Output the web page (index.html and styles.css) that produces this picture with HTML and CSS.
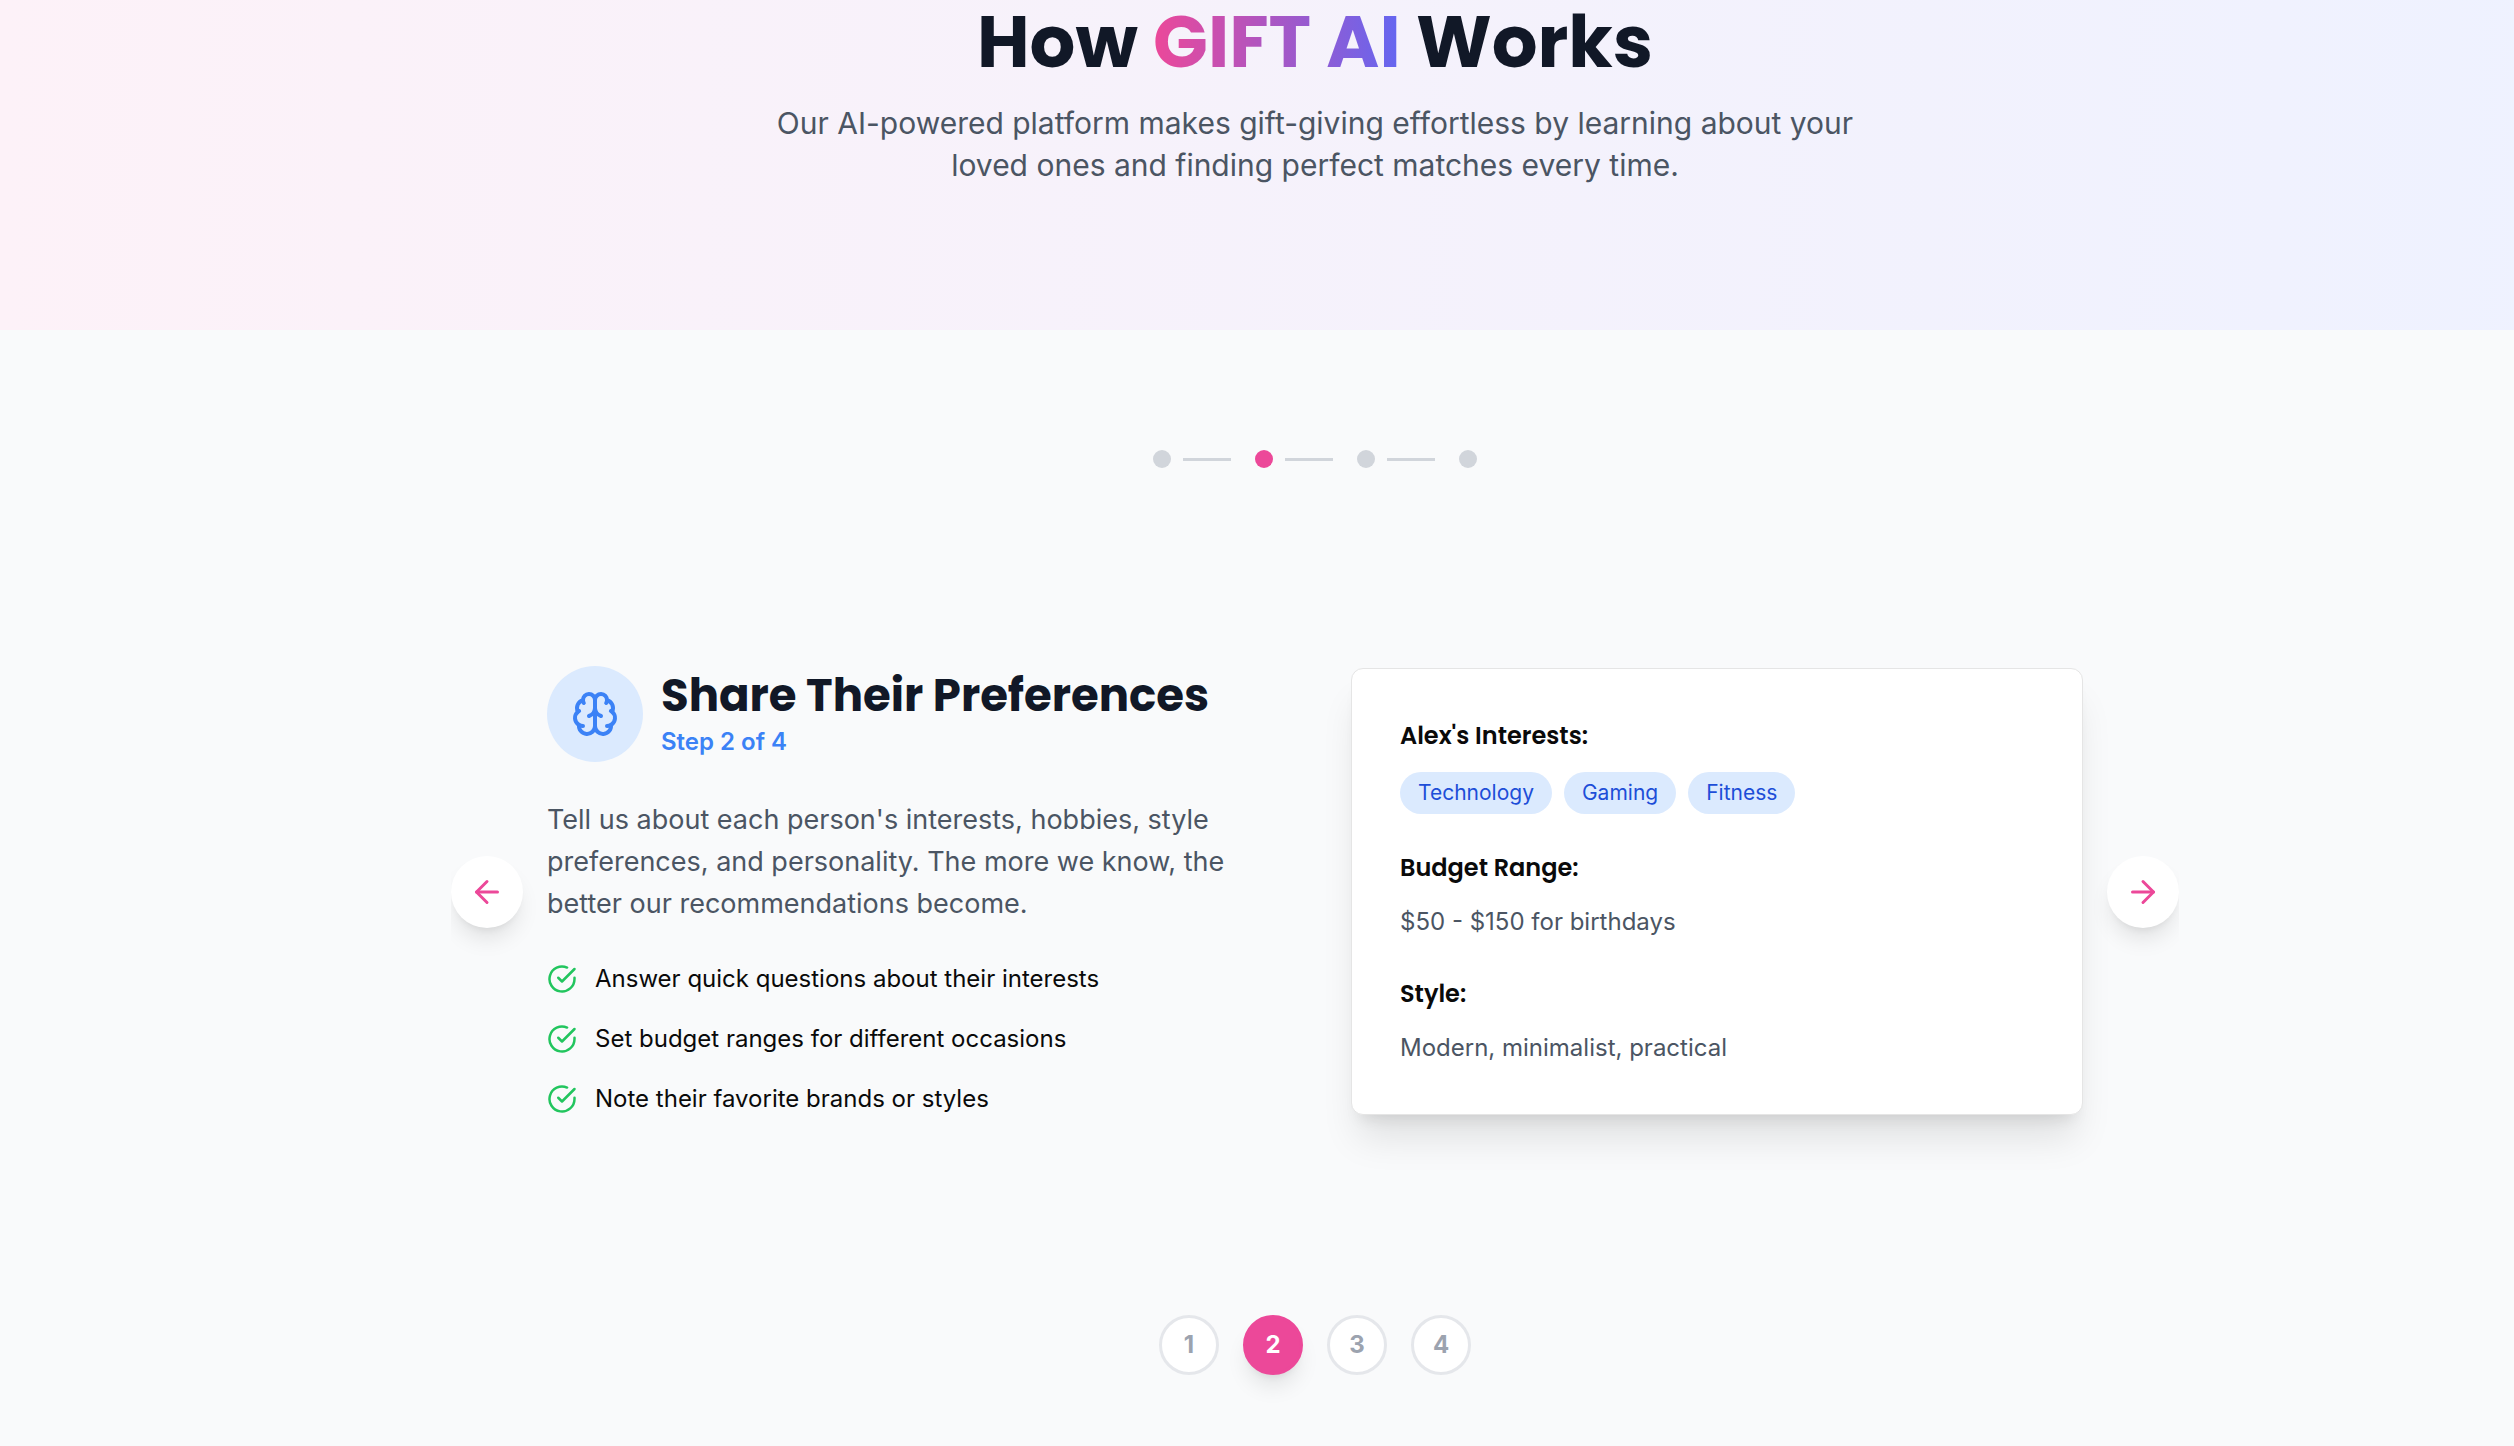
FILE: index.html
```html
<!DOCTYPE html>
<html lang="en">
<head>
<meta charset="utf-8">
<title>How GIFT AI Works</title>
<link rel="stylesheet" href="styles.css">
</head>
<body>
<div class="page">
  <header class="hero">
    <h1 class="hero-title">How <span class="brand">GIFT AI</span> Works</h1>
    <p class="hero-text">Our AI-powered platform makes gift-giving effortless by learning about your loved ones and finding perfect matches every time.</p>
  </header>
  <main class="steps">
    <div class="progress">
      <span class="dot"></span><span class="bar"></span>
      <span class="dot active"></span><span class="bar"></span>
      <span class="dot"></span><span class="bar"></span>
      <span class="dot"></span>
    </div>
    <section class="carousel">
      <button class="arrow" aria-label="Previous step">
        <svg class="icon" viewBox="0 0 24 24"><path d="m12 19-7-7 7-7"/><path d="M19 12H5"/></svg>
      </button>
      <div class="slide">
        <div class="details">
          <div class="step-head">
            <div class="badge">
              <svg class="icon brain" viewBox="0 0 24 24"><path d="M12 5a3 3 0 1 0-5.997.125 4 4 0 0 0-2.526 5.77 4 4 0 0 0 .556 6.588A4 4 0 1 0 12 18Z"/><path d="M12 5a3 3 0 1 1 5.997.125 4 4 0 0 1 2.526 5.77 4 4 0 0 1-.556 6.588A4 4 0 1 1 12 18Z"/><path d="M15 13a4.5 4.5 0 0 1-3-4 4.5 4.5 0 0 1-3 4"/><path d="M17.599 6.5a3 3 0 0 0 .399-1.375"/><path d="M6.003 5.125A3 3 0 0 0 6.401 6.5"/><path d="M3.477 10.896a4 4 0 0 1 .585-.396"/><path d="M19.938 10.5a4 4 0 0 1 .585.396"/><path d="M6 18a4 4 0 0 1-1.967-.516"/><path d="M19.967 17.484A4 4 0 0 1 18 18"/></svg>
            </div>
            <div class="step-heading">
              <h2 class="step-title">Share Their Preferences</h2>
              <p class="step-count">Step 2 of 4</p>
            </div>
          </div>
          <p class="step-text">Tell us about each person's interests, hobbies, style preferences, and personality. The more we know, the better our recommendations become.</p>
          <ul class="checks">
            <li><svg class="icon check" viewBox="0 0 24 24"><path d="M22 11.08V12a10 10 0 1 1-5.93-9.14"/><path d="m9 11 3 3L22 4"/></svg>Answer quick questions about their interests</li>
            <li><svg class="icon check" viewBox="0 0 24 24"><path d="M22 11.08V12a10 10 0 1 1-5.93-9.14"/><path d="m9 11 3 3L22 4"/></svg>Set budget ranges for different occasions</li>
            <li><svg class="icon check" viewBox="0 0 24 24"><path d="M22 11.08V12a10 10 0 1 1-5.93-9.14"/><path d="m9 11 3 3L22 4"/></svg>Note their favorite brands or styles</li>
          </ul>
        </div>
        <div class="card">
          <div class="group">
            <h4 class="label">Alex's Interests:</h4>
            <div class="tags"><span class="tag">Technology</span><span class="tag">Gaming</span><span class="tag">Fitness</span></div>
          </div>
          <div class="group">
            <h4 class="label">Budget Range:</h4>
            <p class="value">$50 - $150 for birthdays</p>
          </div>
          <div class="group">
            <h4 class="label">Style:</h4>
            <p class="value">Modern, minimalist, practical</p>
          </div>
        </div>
      </div>
      <button class="arrow" aria-label="Next step">
        <svg class="icon" viewBox="0 0 24 24"><path d="M5 12h14"/><path d="m12 5 7 7-7 7"/></svg>
      </button>
    </section>
    <nav class="pager">
      <button class="num">1</button>
      <button class="num current">2</button>
      <button class="num">3</button>
      <button class="num">4</button>
    </nav>
  </main>
</div>
</body>
</html>
```

FILE: styles.css
```css
* { box-sizing: border-box; margin: 0; padding: 0; }
html { overflow: hidden; }
body {
  height: 1446px;
  overflow: hidden;
  background: #f9fafb;
  color: #0a0a0a;
  font: 24px/36px Inter, sans-serif;
}
button { border: 0; font: inherit; }
ul { list-style: none; }
.page { width: 2630px; }
.icon {
  width: 36px;
  height: 36px;
  flex: none;
  fill: none;
  stroke: currentColor;
  stroke-width: 2;
  stroke-linecap: round;
  stroke-linejoin: round;
}

/* Hero */
.hero {
  height: 330px;
  padding-top: 6px;
  display: flex;
  flex-direction: column;
  align-items: center;
  gap: 24px;
  text-align: center;
  background: linear-gradient(to right, #fdf2f8, #eef2ff);
}
.hero-title, .step-title, .label {
  font-family: Poppins, Inter, sans-serif;
}
.hero-title {
  font-size: 72px;
  line-height: 72px;
  font-weight: 700;
  color: #111827;
  white-space: nowrap;
}
.brand {
  background: linear-gradient(to right, #ec4899, #6366f1);
  -webkit-background-clip: text;
  background-clip: text;
  color: transparent;
}
.hero-text {
  width: 1152px;
  font-size: 30px;
  line-height: 42px;
  color: #4b5563;
}

/* Progress dots */
.steps { display: flex; flex-direction: column; align-items: center; padding-top: 120px; }
.progress { display: flex; align-items: center; }
.dot { width: 18px; height: 18px; border-radius: 50%; background: #d1d5db; }
.dot.active { background: #ec4899; }
.bar { width: 48px; height: 3px; margin: 1px 24px 0 12px; background: #d1d5db; }

/* Carousel */
.carousel {
  width: 1728px;
  height: 750px;
  margin-top: 49px;
  display: flex;
  align-items: center;
  gap: 24px;
  overflow: hidden;
}
.arrow {
  width: 72px;
  height: 72px;
  flex: none;
  display: grid;
  place-items: center;
  border-radius: 50%;
  background: #fff;
  color: #ec4899;
  box-shadow: 0 15px 22.5px -4.5px rgb(0 0 0 / .1), 0 6px 9px -6px rgb(0 0 0 / .1);
}
.slide {
  flex: 1;
  display: grid;
  grid-template-columns: 1fr 1fr;
  gap: 72px;
  align-items: center;
}
.details { display: flex; flex-direction: column; gap: 36px; padding-bottom: 1px; }
.step-head { display: flex; align-items: center; gap: 18px; margin-bottom: 1px; }
.step-heading { padding-top: 1px; }
.badge {
  width: 96px;
  height: 96px;
  display: grid;
  place-items: center;
  border-radius: 50%;
  background: #dbeafe;
  color: #3b82f6;
}
.brain { width: 48px; height: 48px; }
.step-title {
  margin-bottom: 1px;
  font-size: 45px;
  line-height: 54px;
  font-weight: 700;
  color: #111827;
  white-space: nowrap;
}
.step-count { font-weight: 600; color: #3b82f6; }
.step-text { font-size: 27px; line-height: 42px; color: #4b5563; }
.checks { display: flex; flex-direction: column; gap: 24px; }
.checks li { display: flex; align-items: center; gap: 18px; }
.check { width: 30px; height: 30px; color: #22c55e; }

/* Preview card */
.card {
  display: flex;
  flex-direction: column;
  gap: 36px;
  margin-bottom: 1px;
  padding: 49px 48px 48px;
  border: 1px solid #e5e5e5;
  border-radius: 12px;
  background: #fff;
  box-shadow: 0 30px 37.5px -7.5px rgb(0 0 0 / .1), 0 12px 15px -9px rgb(0 0 0 / .1);
}
.group { display: flex; flex-direction: column; gap: 18px; }
.label { font-size: 24px; line-height: 36px; font-weight: 600; }
.tags { display: flex; gap: 12px; }
.tag {
  padding: 6px 18px;
  border-radius: 21px;
  background: #dbeafe;
  color: #1d4ed8;
  font-size: 21px;
  line-height: 30px;
}
.value { color: #4b5563; }

/* Step pager */
.pager { display: flex; gap: 24px; margin-top: 48px; }
.num {
  width: 60px;
  height: 60px;
  border: 3px solid #e5e7eb;
  border-radius: 50%;
  background: #fff;
  color: #9ca3af;
  font-weight: 700;
}
.num.current {
  border-color: #ec4899;
  background: #ec4899;
  color: #fff;
  box-shadow: 0 15px 22.5px -4.5px rgb(0 0 0 / .1), 0 6px 9px -6px rgb(0 0 0 / .1);
}
```
